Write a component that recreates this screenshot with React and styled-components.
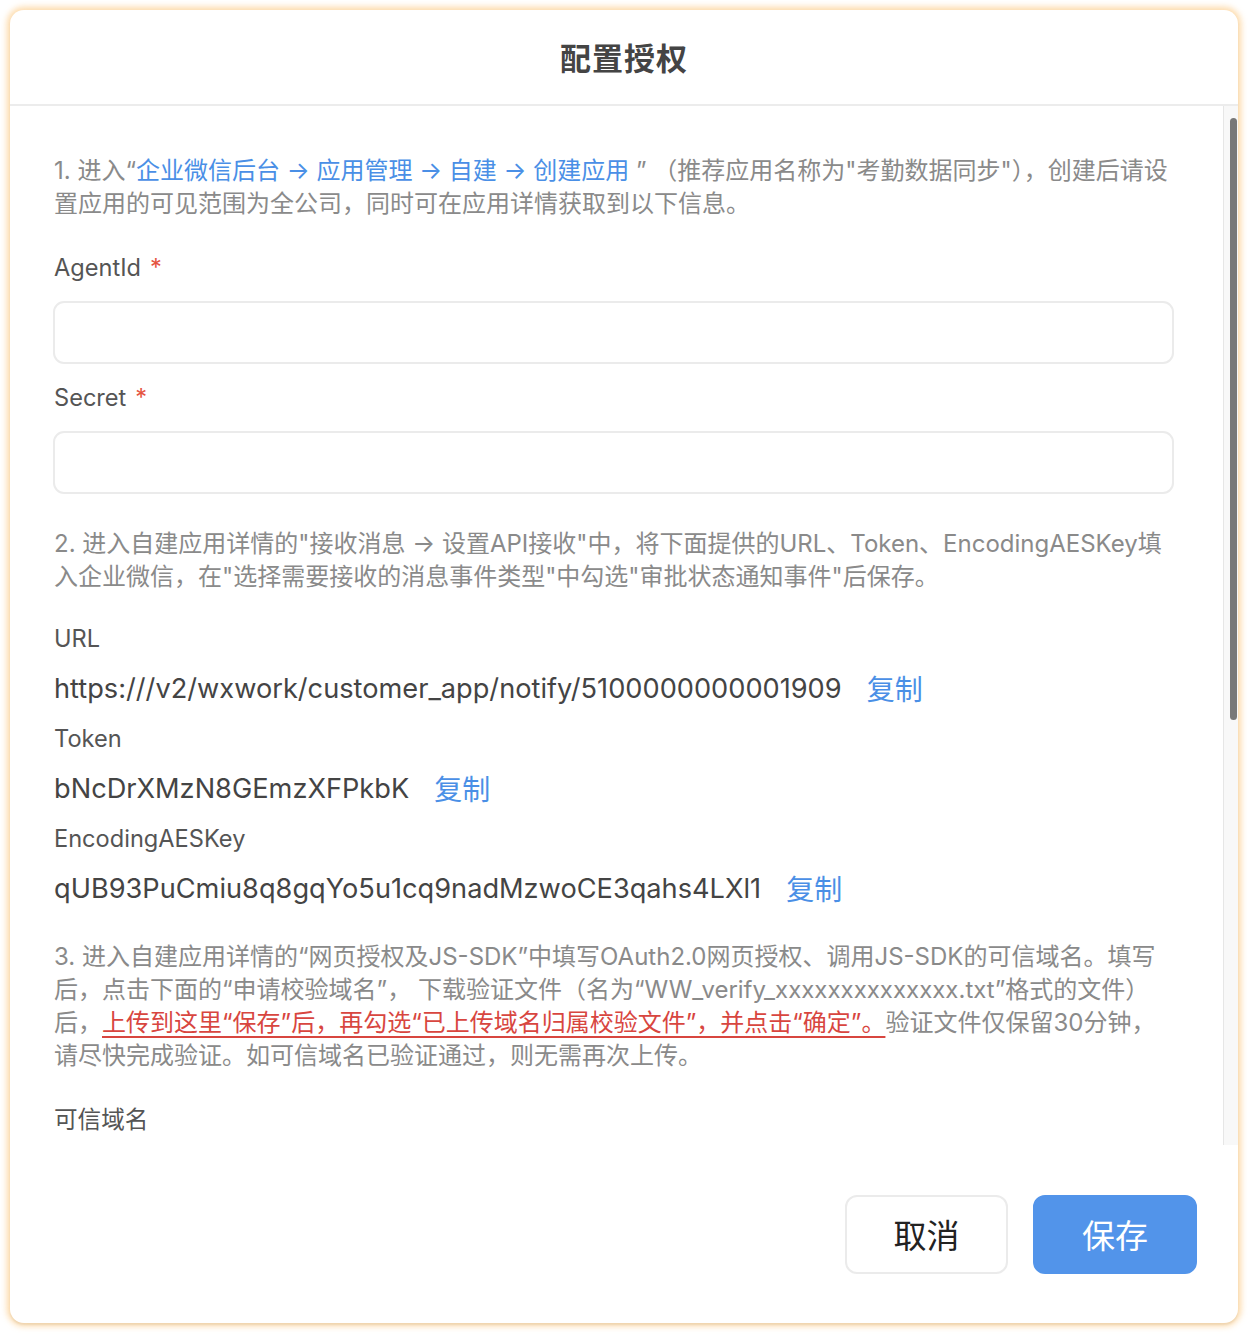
import React from "react";
import styled, { createGlobalStyle } from "styled-components";

const GlobalStyle = createGlobalStyle`
  html, body {
    margin: 0;
    padding: 0;
    background: #ffffff;
  }
  body {
    font-family: Inter, "Noto Sans CJK SC", "Noto Sans", sans-serif;
  }
  * {
    box-sizing: border-box;
  }
`;

const Page = styled.div`
  padding: 10px;
  width: 1248px;
  height: 1334px;
`;

const Modal = styled.div`
  width: 1228px;
  height: 1313px;
  background: #fff;
  border-radius: 14px;
  box-shadow: 0 0 6px 3px rgba(252, 205, 140, 0.75), 0 2px 2px rgba(0, 0, 0, 0.12);
  display: flex;
  flex-direction: column;
  overflow: hidden;
`;

const Header = styled.div`
  height: 96px;
  flex-shrink: 0;
  display: flex;
  align-items: center;
  justify-content: center;
  border-bottom: 2px solid #ececec;
`;

const Title = styled.h2`
  margin: 0;
  margin-top: -2px;
  font-size: 31px;
  font-weight: 700;
  color: #444;
  letter-spacing: 1px;
`;

const BodyWrap = styled.div`
  flex: 1;
  min-height: 0;
  display: flex;
`;

const Body = styled.div`
  flex: 1;
  min-width: 0;
  overflow: hidden;
  padding: 48px 49px 40px 43px;
`;

const ScrollTrack = styled.div`
  width: 15px;
  flex-shrink: 0;
  background: #f8f8f8;
  border-left: 1px solid #e6e6e6;
  padding: 12px 1px 0 6px;
`;

const ScrollThumb = styled.div`
  height: 602px;
  border-radius: 4px;
  background: #787878;
`;

const Para = styled.p`
  margin: 0 0 0 1px;
  font-size: 24px;
  line-height: 33px;
  color: #8a8a8a;
`;

const Link = styled.span`
  color: #4a8fe6;
`;

const Warn = styled.span`
  color: #d8463f;
  text-decoration: underline;
  text-underline-offset: 5px;
  text-decoration-thickness: 2px;
`;

const Label = styled.div`
  margin: ${(p) => p.$top ?? 31}px 0 ${(p) => p.$bottom ?? 17}px 1px;
  font-size: 23.6px;
  line-height: 33px;
  color: #555;
`;

const Star = styled.span`
  color: #e5533f;
  margin-left: 9px;
`;

const Input = styled.input`
  display: block;
  width: 100%;
  height: 63px;
  border: 2px solid #ebebeb;
  border-radius: 11px;
  background: #fff;
  outline: none;
  padding: 0 20px;
  font-size: 22px;
  font-family: inherit;
`;

const ValueRow = styled.div`
  margin: 0 0 11px 1px;
  padding-bottom: 2px;
  display: flex;
  align-items: center;
  height: 44px;
  font-size: 27.2px;
  color: #444;
`;

const Copy = styled.span`
  margin-left: 25px;
  font-size: 28px;
  color: #4a8fe6;
  cursor: pointer;
`;

const Gap = styled.div`
  height: ${(p) => p.$h}px;
`;

const SmallButton = styled.button`
  margin-top: 20px;
  height: 52px;
  padding: 0 24px;
  border: 2px solid #ebebeb;
  border-radius: 10px;
  background: #fff;
  font-size: 22px;
  font-family: inherit;
  color: #444;
`;

const Footer = styled.div`
  height: 178px;
  flex-shrink: 0;
  display: flex;
  align-items: center;
  justify-content: flex-end;
  gap: 25px;
  padding: 0 41px 0 0;
`;

const Button = styled.button`
  width: ${(p) => (p.$primary ? 164 : 163)}px;
  height: 79px;
  border-radius: 12px;
  border: 2px solid ${(p) => (p.$primary ? "#5294ea" : "#ebebeb")};
  background: ${(p) => (p.$primary ? "#5294ea" : "#fff")};
  color: ${(p) => (p.$primary ? "#fff" : "#222")};
  font-size: 33px;
  font-family: inherit;
  cursor: pointer;
`;

const Field = ({ label, required, top }) => (
  <>
    <Label $top={top}>
      {label}
      {required && <Star>*</Star>}
    </Label>
    <Input />
  </>
);

const Item = ({ label, value, top }) => (
  <>
    <Label $top={top} $bottom={12}>
      {label}
    </Label>
    <ValueRow>
      {value}
      <Copy>复制</Copy>
    </ValueRow>
  </>
);

export default function App() {
  return (
    <Page>
      <GlobalStyle />
      <Modal>
        <Header>
          <Title>配置授权</Title>
        </Header>
        <BodyWrap>
          <Body>
            <Para>
              1. 进入“<Link>企业微信后台 → 应用管理 → 自建 → 创建应用</Link> ” （推荐应用名称为"考勤数据同步"），创建后请设置应用的可见范围为全公司，同时可在应用详情获取到以下信息。
            </Para>
            <Field label="AgentId" required top={31} />
            <Field label="Secret" required top={17} />
            <Gap $h={33} />
            <Para>
              2. 进入自建应用详情的"接收消息 → 设置API接收"中，将下面提供的URL、Token、EncodingAESKey填入企业微信，在"选择需要接收的消息事件类型"中勾选"审批状态通知事件"后保存。
            </Para>
            <Item label="URL" value="https:///v2/wxwork/customer_app/notify/5100000000001909" top={29} />
            <Item label="Token" value="bNcDrXMzN8GEmzXFPkbK" top={0} />
            <Item label="EncodingAESKey" value="qUB93PuCmiu8q8gqYo5u1cq9nadMzwoCE3qahs4LXl1" top={0} />
            <Gap $h={18} />
            <Para>
              3. 进入自建应用详情的“网页授权及JS-SDK”中填写OAuth2.0网页授权、调用JS-SDK的可信域名。填写后，点击下面的“申请校验域名”， 下载验证文件（名为“WW_verify_xxxxxxxxxxxxxx.txt”格式的文件）后，
              <Warn>上传到这里“保存”后，再勾选“已上传域名归属校验文件”，并点击“确定”。</Warn>
              验证文件仅保留30分钟，请尽快完成验证。如可信域名已验证通过，则无需再次上传。
            </Para>
            <Field label="可信域名" top={31} />
            <SmallButton>申请校验域名</SmallButton>
          </Body>
          <ScrollTrack>
            <ScrollThumb />
          </ScrollTrack>
        </BodyWrap>
        <Footer>
          <Button>取消</Button>
          <Button $primary>保存</Button>
        </Footer>
      </Modal>
    </Page>
  );
}
